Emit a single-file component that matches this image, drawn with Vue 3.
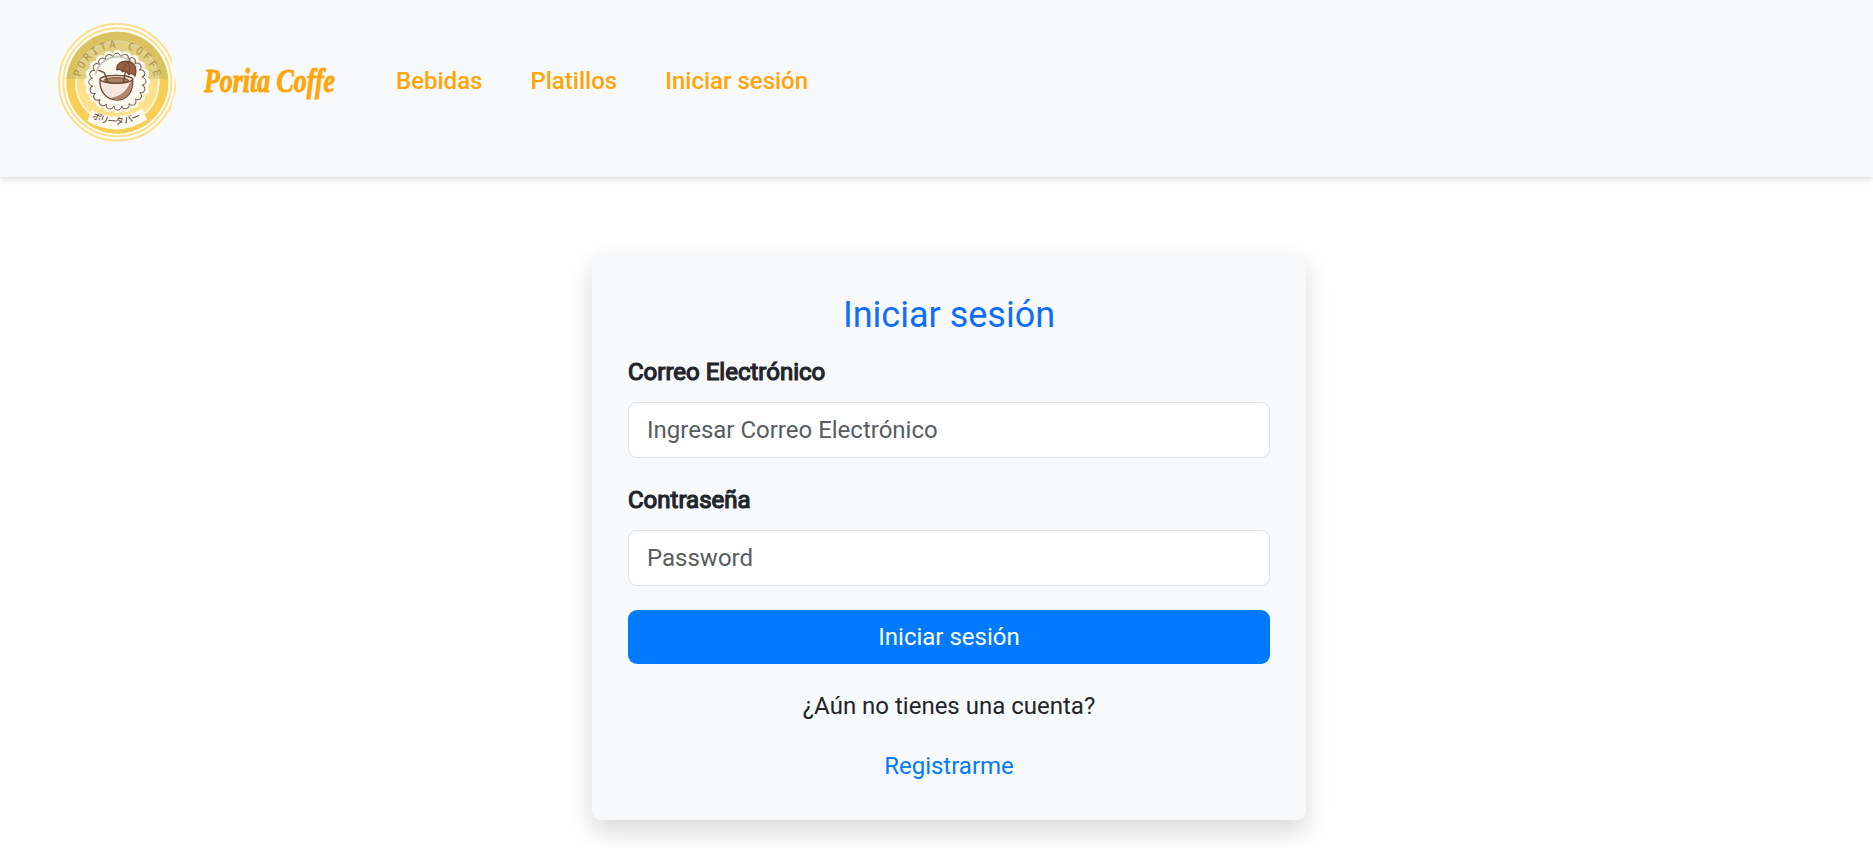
<script setup>
import { ref } from 'vue'

const links = ['Bebidas', 'Platillos', 'Iniciar sesión']
const email = ref('')
const password = ref('')

const petals = Array.from({ length: 20 }, (_, i) => {
  const a = (i / 20) * Math.PI * 2
  return { x: 202 + 84 * Math.cos(a), y: 200 + 80 * Math.sin(a), r: (i * 18) + 90 }
})
</script>

<template>
  <div class="page">
    <nav class="navbar">
      <svg class="logo" viewBox="0 0 405 405" role="img" aria-label="Porita Coffe">
        <defs>
          <path id="arcTop" d="M91 187 A114 114 0 0 1 313 187" />
          <path id="arcBottom" d="M120 306 Q202 353 290 300" />
          <clipPath id="upper"><rect x="0" y="0" width="405" height="192" /></clipPath>
          <clipPath id="edge"><path d="M0 0H362L367 160L378 200V225L367 262L362 405H0Z" /></clipPath>
        </defs>
        <g clip-path="url(#edge)">
          <circle cx="202" cy="202" r="175" fill="#fefcf5" stroke="#fbdf8e" stroke-width="6" />
          <circle cx="202" cy="202" r="162" fill="none" stroke="#fbdf8e" stroke-width="6" />
        </g>
        <circle cx="202" cy="203" r="153" fill="#f8ce54" />
        <circle cx="202" cy="203" r="127" fill="#fde08c" />
        <circle cx="202" cy="203" r="124" fill="none" stroke="#fff8de" stroke-width="5" />
        <circle cx="202" cy="203" r="153" fill="#d3c163" fill-opacity=".85" clip-path="url(#upper)" />
        <circle cx="202" cy="203" r="105" fill="none" stroke="#e0d07f" stroke-width="38" clip-path="url(#upper)" />
        <circle cx="202" cy="203" r="124" fill="none" stroke="#ddd6a4" stroke-width="5" clip-path="url(#upper)" />
        <g fill="#fcf9f0">
          <circle cx="202" cy="200" r="87" />
          <circle v-for="(p, i) in petals" :key="i" :cx="p.x" :cy="p.y" r="15" />
        </g>
        <g fill="none" stroke="#7d6454" stroke-width="3" stroke-linecap="round">
          <path
            v-for="(p, i) in petals" :key="i"
            d="M-13 4 Q-10 -8 1 -7 Q10 -5 10 4"
            :transform="`translate(${202 + (p.x - 202) * 0.94} ${200 + (p.y - 200) * 0.98}) rotate(${p.r})`"
          />
        </g>
        <path d="M137 178A67 67 0 0 1 260 158" fill="none" stroke="#c6c5bd" stroke-width="5" />
        <g stroke="#6e4630" stroke-width="4" stroke-linecap="round" stroke-linejoin="round">
          <path d="M150 194C148 230 169 255 202 255C230 255 251 231 248 192Z" fill="#f6e5dc" />
          <path d="M181 249C217 244 233 222 241 202L247 200C247 234 225 257 196 254Z" fill="#b08672" stroke="none" />
          <ellipse cx="199" cy="193" rx="49" ry="12" fill="#f2dfc9" />
          <ellipse cx="199" cy="196" rx="37" ry="8" fill="#a98265" stroke-width="3" />
          <path d="M146 166L163 173L174 201" fill="none" />
          <path d="M231 145L220 202" fill="none" />
          <path d="M201 165C198 146 214 137 235 139C253 143 262 160 255 183C248 174 241 174 236 179C231 169 225 166 218 170C211 162 207 161 201 165Z" fill="#976047" />
          <path d="M235 140Q222 150 218 169M235 140Q243 157 236 178M237 139L240 132" fill="none" stroke-width="3" />
        </g>
        <path d="M124 285Q201 326 278 280L291 314Q200 370 112 319Z" fill="#fffaf0" />
        <text class="ring-text"><textPath href="#arcTop" startOffset="0" textLength="304">PORITA COFFE</textPath></text>
        <text class="kana-text"><textPath href="#arcBottom" startOffset="6" textLength="154">ポリータ バー</textPath></text>
      </svg>
      <svg class="brand" viewBox="0 0 150 60">
        <text x="6" y="38" textLength="131" lengthAdjust="spacingAndGlyphs">Porita Coffe</text>
      </svg>
      <div class="links">
        <a v-for="link in links" :key="link">{{ link }}</a>
      </div>
    </nav>

    <form class="card" @submit.prevent>
      <h2>Iniciar sesión</h2>
      <label for="email">Correo Electrónico</label>
      <input id="email" v-model="email" type="email" placeholder="Ingresar Correo Electrónico" />
      <label for="password">Contraseña</label>
      <input id="password" v-model="password" type="password" placeholder="Password" />
      <button type="submit">Iniciar sesión</button>
      <p>¿Aún no tienes una cuenta?</p>
      <a class="register">Registrarme</a>
    </form>
  </div>
</template>

<style>
body {
  margin: 0;
  background: #fff;
  overflow: hidden;
}
</style>

<style scoped>
.page {
  height: 848px;
  overflow: hidden;
  font-family: Roboto, sans-serif;
  font-size: 24px;
  line-height: 36px;
  color: #212529;
}
.page * {
  box-sizing: border-box;
}
.navbar {
  display: flex;
  align-items: flex-start;
  height: 177px;
  padding: 15px 50px;
  background: #f8f9fb;
  box-shadow: 0 3px 6px rgba(0, 0, 0, 0.12);
}
.logo {
  width: 135px;
  height: 135px;
}
.ring-text {
  font: 31px "DejaVu Sans Mono", monospace;
  fill: #b1914f;
}
.kana-text {
  font: 500 27px "Noto Sans CJK JP", sans-serif;
  fill: #6b5140;
}
.brand {
  width: 150px;
  height: 60px;
  margin: 39px 0 0 13px;
  overflow: visible;
}
.brand text {
  font: italic 700 33px "Liberation Serif", serif;
  fill: #ffa50a;
  stroke: #ffa50a;
  stroke-width: 0.9px;
}
.links {
  display: flex;
  gap: 48px;
  margin: 48px 0 0 48px;
  font-weight: 500;
  color: #ffa50a;
}
.card {
  display: flex;
  flex-direction: column;
  width: 714px;
  margin: 75px 0 0 592px;
  padding: 36px;
  border-radius: 9px;
  background: #f8f9fb;
  box-shadow: 0 12px 24px rgba(0, 0, 0, 0.15);
}
h2 {
  margin: 0 0 12px;
  font-size: 36px;
  font-weight: 400;
  line-height: 54px;
  text-align: center;
  color: #0d6efd;
}
label {
  margin-bottom: 12px;
  -webkit-text-stroke: 1.2px #212529;
}
input {
  height: 56px;
  margin: 0 0 24px;
  padding: 9px 18px;
  border: 1px solid #dee2e6;
  border-radius: 9px;
  background: #fff;
  font: inherit;
  color: inherit;
}
input::placeholder {
  color: #595c5f;
  opacity: 1;
}
button {
  height: 54px;
  padding: 9px;
  border: 0;
  border-radius: 9px;
  background: #007bff;
  font: inherit;
  color: #fff;
}
p {
  margin: 24px 0;
  text-align: center;
}
.register {
  text-align: center;
  color: #007bff;
}
</style>
